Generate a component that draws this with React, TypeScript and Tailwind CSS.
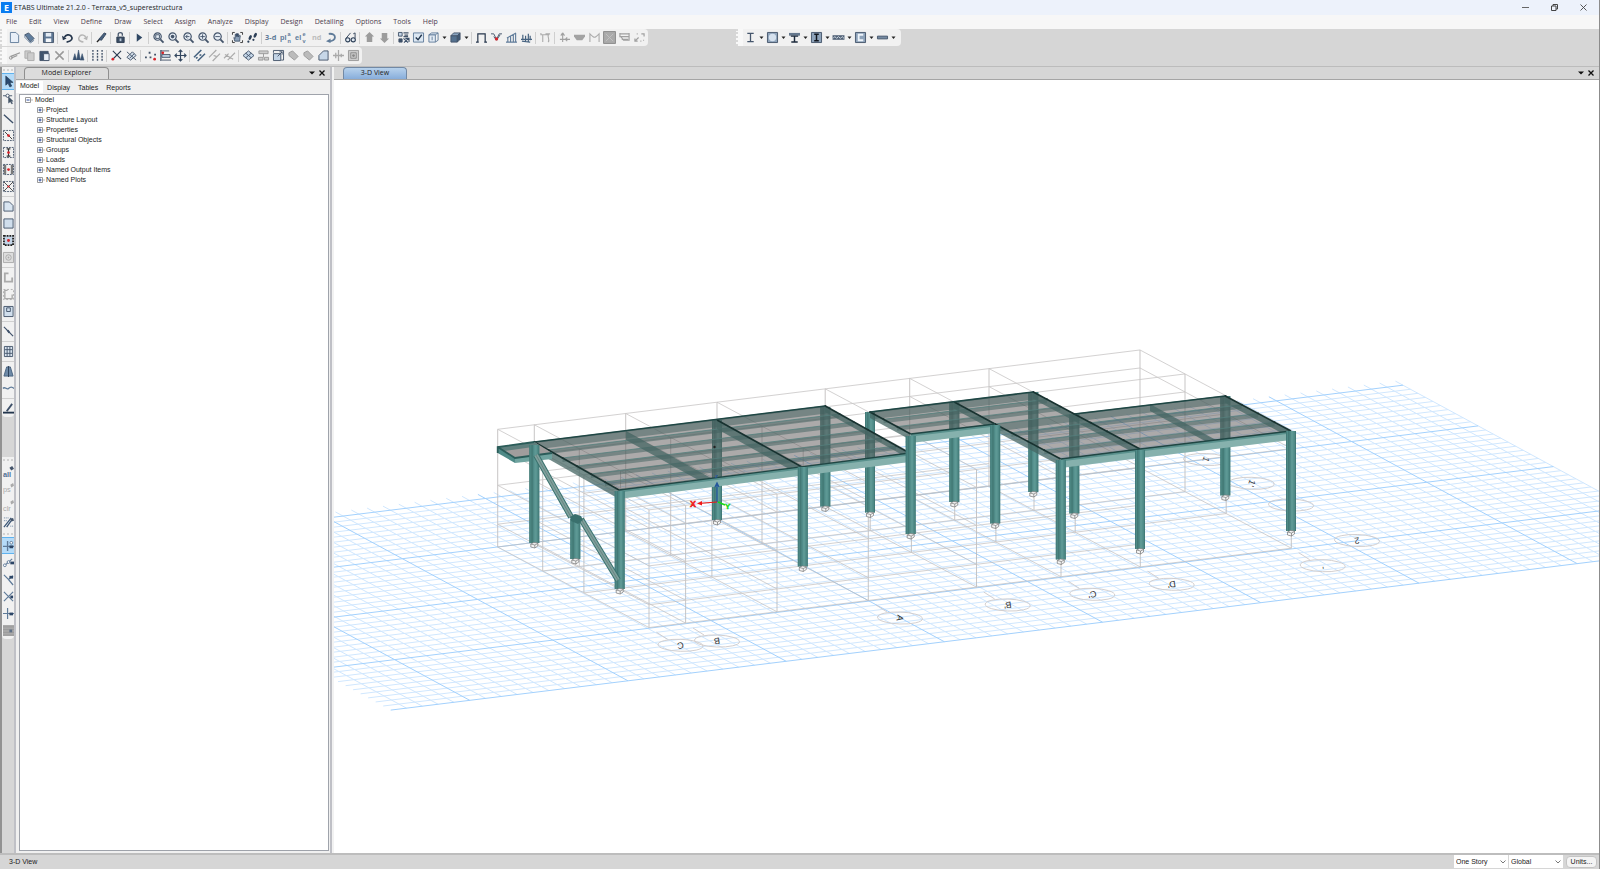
import type { ReactNode } from "react";

const D = "#44546a";
const B = "#5f7b99";
const L = "#c3d4e6";
const G = "#ababab";
const R = "#d8232a";

const ln = (d: string, c = D, w = 1) => <path d={d} fill="none" stroke={c} strokeWidth={w} />;
const sh = (d: string, f = L, c = D, w = 1) => <path d={d} fill={f} stroke={c} strokeWidth={w} />;
const lens = (inner: ReactNode) => (
  <>
    <circle cx="5" cy="5" r="4" fill="#e6edf5" stroke={D} strokeWidth="1.3" />
    <path d="M8 8l3.5 3.5" stroke={D} strokeWidth="2" />
    {inner}
  </>
);
const dashBox = <path d="M.5 .5h11v11h-11z" fill="none" stroke={D} strokeDasharray="2 1" />;
const word = (t: string, c = B, x = 0) => (
  <text x={x} y="9" fontSize="8" fontWeight="bold" fill={c} fontFamily="Open Sans, sans-serif">{t}</text>
);
const stacked = (lead: string, top: string, low: string) => (
  <g fontWeight="bold" fill={B} fontFamily="Liberation Sans, sans-serif">
    <text x="-1" y="9" fontSize="8">{lead}</text>
    <text x="7" y="4" fontSize="6">{top}</text>
    <text x="7" y="12" fontSize="6">{low}</text>
  </g>
);

const icons: Record<string, ReactNode> = {
  "New Model": sh("M1.5 .5h6l3 3v8h-9z", "#e8eff8", B),
  "Open": <>{sh("M1 3l4-2 6 6-4 4z", "#5f7d9d")}{ln("M1 3v3l6 6 4-3", B)}</>,
  "Save": <>{sh("M.5 .5h11v11h-11z", "#5c7592")}<path d="M3 1h6v4H3z" fill="#e4ebf3" /><path d="M3 7h6v4H3z" fill="#f4f7fa" /></>,
  "Undo": <>{ln("M5 11c6-1 7-4 5-6.500S4 3 2.500 6", "#26364c", 1.8)}<path d="M0 4l1 5 4-2z" fill="#26364c" /></>,
  "Redo": <>{ln("M7 11C1 10 1 7 3 4.500s6-1 6.500 1.500", "#b5b5b5", 1.6)}<path d="M12 4l-1 5-4-2z" fill="#b5b5b5" /></>,
  "Refresh": <>{ln("M1 11l3-3", "#222", 1.5)}{sh("M3 8l6-7 2 1-5 7z", "#47617f", "#31445c")}</>,
  "Lock Model": <>{sh("M2 5.500h8v6H2z", "#3a4c63", "#2c3c51")}{ln("M3.500 5V2.500C3.500 0 8 0 8 2.500V4", D, 1.4)}<path d="M5 7h2v3H5z" fill="#b9c8d8" /></>,
  "Run Analysis": <path d="M3 1.500l6 4.500-6 4.500z" fill="#2f4763" />,
  "Rubber Band Zoom": lens(<path d="M3 3h4v4H3z" fill="none" stroke={D} />),
  "Restore Full View": lens(<circle cx="5" cy="5" r="2" fill={D} />),
  "Previous Zoom": lens(<path d="M7 5H3m2-2L3 5l2 2" fill="none" stroke={D} />),
  "Zoom In": lens(<path d="M2.500 5h5M5 2.500v5" stroke={D} />),
  "Zoom Out": lens(<path d="M2.500 5h5" stroke={D} />),
  "Pan": <>{ln("M.500 3V.500H3M9 .500h2.500V3M.500 9v2.500H3M9 11.500h2.500V9", "#333")}{sh("M3 10L2 6l1.500 1V2.500h1.200V5V1.800h1.200V5V2h1.200v3.500l1-2 1 .500L8.500 8v2z", "#8ba0b8", "#33465e", 0.8)}</>,
  "Walk Through": <><ellipse cx="3.500" cy="6" rx="1.500" ry="2.800" fill="#2c3f57" transform="rotate(25 3.500 6)" /><ellipse cx="9" cy="3.500" rx="1.500" ry="2.800" fill="#2c3f57" transform="rotate(25 9 3.500)" /><circle cx="1.500" cy="10.500" r="1.200" fill="#2c3f57" /><circle cx="7" cy="8.500" r="1.200" fill="#2c3f57" /></>,
  "3-D View": word("3-d", B, -1),
  "Plan View": stacked("pl", "a", "n"),
  "Elevation View": stacked("el", "e", "v"),
  "Named View": word("nd", "#bdbdbd", 1),
  "Rotate View": <>{ln("M3 2c9-1 9 8 0 8", B, 2)}<path d="M5 7v5L0 10z" fill={B} /></>,
  "Perspective": <><circle cx="3" cy="8.500" r="2.300" fill="#dfe7f0" stroke="#2f4158" strokeWidth="1.200" /><circle cx="9" cy="8.500" r="2.300" fill="#dfe7f0" stroke="#2f4158" strokeWidth="1.200" />{ln("M1 7L6 1M11 7V1L9 2", "#2f4158")}</>,
  "Move Up": <path d="M6 0l5 5H9v6H3V5H1z" fill="#9c9c9c" />,
  "Move Down": <path d="M6 12l5-5H9V1H3v6H1z" fill="#9c9c9c" />,
  "Object Shrink": <>{sh("M.500 .500h4v4h-4z", L)}{ln("M6 1h5.500M7 3.500h4M6 5h5", D, 1.3)}{sh("M1 7.500h3.500v3.500H1z", "#3b4f69")}{ln("M6 7l5 4.500M11.500 7l-5 4.500M8 7h4v4", "#3b4f69", 1.2)}</>,
  "Display Options": <>{sh("M.500 1h11v10H.500z", "#dce7f2", B)}{ln("M3 6l2.500 2.500L9.500 3", "#22354c", 1.5)}</>,
  "Set View Cube": <>{sh("M1 3h7v8H1z", "#e4ecf5", B)}{sh("M1 3l3-2h7L8 3z", "#e4ecf5", B)}{ln("M11 1v8l-3 2M4.500 5v4", B)}</>,
  "Extruded View": <>{sh("M1 4h7v7H1z", "#54718f")}{sh("M1 4l3-3h7L8 4z", "#8aa4bf")}{sh("M11 1v7l-3 3V4z", "#3f5874")}</>,
  "Undeformed Shape": ln("M0 11h3M2 11V2h8v9M9 11h3", "#26364c", 1.3),
  "Joint Loads": <>{ln("M0 2h3l3 6 3-6h3M3 5l3 4 4-6", D)}<circle cx="6" cy="7.500" r="1.800" fill={R} /></>,
  "Frame Loads": ln("M0 11h12M2 11V6.500M5 11V5M8 11V3M10.500 11V1M1 6.500L11 1", B, 1.2),
  "Shell Loads": ln("M0 8h12M2 8V3M5 10V4M8 11V2M10 9V4M1 10l9 1", "#46627f", 1.3),
  "Deformed Shape": ln("M1 1v2h9M3 11V3M9 11c2-3-1-5 0-8M6 2h5", G, 1.2),
  "Joint Reactions": ln("M4 1v10M4 1L2 4M4 1l2 3M1 8h6M8 8h4M9 6l-2 2 2 2", "#a0a0a0", 1.2),
  "Soil Pressure": <path d="M0 3h12v2l-3 4H3L0 5z" fill="#a3a3a3" />,
  "Frame Forces": ln("M1 11V2c5 5 5 5 10 0v9", G, 1.2),
  "Shell Forces": <><path d="M-.500-.500h13v13h-13z" fill="#aaa" stroke="#888" /><path d="M2 2l8 8M10 2L2 10" stroke="#c2c2c2" /></>,
  "Energy Diagram": ln("M1 1v4h10V1M1 2h10M2 5l3 4h6V5M3 8h7", "#a0a0a0", 1.3),
  "Design Results": ln("M1 10l4-4M1 7v3h3M8 2h3v3M3 2h1M7 10h1M10 9h1", "#a0a0a0", 1.3),
  "Cut": <>{ln("M2 7l10-4M2 9l7-3", "#999", 1.4)}<circle cx="2" cy="8.500" r="1.600" fill="none" stroke="#999" /></>,
  "Copy": <>{sh("M1 1h6v8H1z", "#ccc", G)}{sh("M4 3h7v8.500H4z", "#ccc", G)}</>,
  "Paste": <>{sh("M1 1.500h9v10H1z", "#3f546e")}{sh("M5 4h6v7.500H5z", "#e8eff7")}</>,
  "Delete": ln("M1.500 1.500l9 9M10.500 1.500l-9 9", "#999", 1.6),
  "Towers": <path d="M0 11l2-7 2 7M4 11l2-11 2 11M8 11l2-7 2 7z" fill="#395270" stroke="#395270" strokeWidth="0.600" />,
  "Grids": <path d="M1 0v12M6 0v12M11 0v12" stroke={D} strokeWidth="1.500" strokeDasharray="2 1.200" />,
  "Replicate Line": <>{ln("M2 1l9 9M11 1L3 9", "#2c3c51", 1.2)}<circle cx="2" cy="10" r="1.500" fill={R} /></>,
  "Extrude": <>{sh("M1 8l6-6 4 4-6 5z", "#d3deea", D)}{ln("M1 2l10 9M4 9l5-5", D)}</>,
  "Joint Pattern": <><path d="M0 7h2v2H0zM4 2h2v2H4zM5 7h2v2H5zM10 4h2v2h-2z" fill={D} /><circle cx="10.500" cy="10" r="1.500" fill={R} /></>,
  "Align": <>{ln("M1 0v12", D, 1.4)}{sh("M2 5h9v3H2z")}{ln("M2 11h10M1 1h9", D)}<circle cx="3" cy="3" r="1.500" fill={R} /></>,
  "Move": ln("M6 0v12M0 6h12M4 2l2-2 2 2M4 10l2 2 2-2M2 4L0 6l2 2M10 4l2 2-2 2", "#33475f", 1.3),
  "Edit Frame": ln("M0 8l8-8M4 12l8-8M2 9l2-1M8 5L6 6", "#46627f", 1.6),
  "Divide Frame": ln("M0 8l8-8M4 12l8-8M5 6l3 1", "#aaa", 1.3),
  "Join Frame": ln("M0 9l5-5M7 8l5-5M4 11l3-3M1 5l9 5", "#aaa", 1.2),
  "Mesh Shell": <>{sh("M0 6l6-5 6 5-6 5z")}{ln("M3 3.500l6 5M9 3.500l-6 5", D)}</>,
  "Merge Shell": <>{sh("M1 1h10v3H1zM.500 8h5v3h-5zM7 8h4.500v3H7z", "#ccc", "#999")}{ln("M6 4v4", "#999")}</>,
  "Expand Shell": <>{sh("M.500 4h8v7.500h-8z")}{ln("M.500 3V.500h11V11H9M5 7l5-5M7 2h3v3", D)}</>,
  "Split Shell": sh("M1 3l4-2 6 6-4 4-6-5z", "#bbb", "#999"),
  "Modify Shell": sh("M1 3l4-2 6 6-4 4-6-5z", "#bbb", "#999"),
  "Chamfer": sh("M1 11V6l5-5h5v10z", "#c7d7e8", D),
  "Reverse Wall": ln("M6 0v12M0 6h12M3 3v6M9 4v4", "#aaa", 1.4),
  "Openings": <>{sh("M.500 .500h11v11H.500z", "#ccc", "#999")}{ln("M3 3h6v6H3z", "#888")}<circle cx="6" cy="6" r="1.500" fill="#888" /></>,
  "Frame Section": ln("M2.500 1.500h7M2.500 10.500h7M6 1.500v9", "#45566c", 1.4),
  "Column Section": <>{sh("M.500 .500h11v11H.500z", "#8ea3ba")}<circle cx="6" cy="6" r="4" fill="#d5e1ee" /></>,
  "Composite Beam": <><path d="M0 1h12v3H0z" fill="#65788e" />{ln("M2 4.500h8M6 4v7M2.500 11h7", "#1c2a3c", 1.6)}</>,
  "Encased Column": <>{sh("M.500 .500h11v11H.500z", "#8ea3ba")}{ln("M3.500 2.500h5M3.500 9.500h5M6 2.500v7", "#10151c", 1.6)}</>,
  "Steel Joist": <><path d="M-.500 3.500h13v5h-13z" fill="#506176" />{ln("M0 7l2-2 2 2 2-2 2 2 2-2 2 2", "#dce5ee", 1)}</>,
  "Wall Section": <>{sh("M.500 .500h11v11H.500z", "#8ea3ba")}{ln("M9 3H4v6h5", "#eef4fa", 2)}</>,
  "Slab Section": sh("M.500 4.500h11v3H.500z", "#7489a0"),
  "Select Object": sh("M3 0v10l2.500-2 2 4 2-1-2-4H11z", "#2a4a70", "#1f3146", 0.6),
  "Reshape Object": <>{ln("M0 3h10", D)}<circle cx="5" cy="3" r="1.800" fill="#fff" stroke={D} />{sh("M6 4v7l2-1.500 1.500 2.500 1-.500L9 9h2z", "#456", D, 0.5)}</>,
  "Draw Line": ln("M1 2l10 9", "#3e5069", 1.5),
  "Quick Draw Frame": <>{dashBox}{ln("M2 2l8 8", "#333", 1)}<circle cx="6" cy="6" r="1.500" fill={R} /></>,
  "Quick Draw Column": <>{dashBox}{ln("M4 2h4M4 10h4M6 2v8", "#333", 1.2)}<circle cx="6" cy="6" r="1.500" fill={R} /></>,
  "Quick Draw Secondary": <><path d="M1 1h2.500v10H1zM8.500 1H11v10H8.500z" fill="#7a7a7a" />{dashBox}<circle cx="6" cy="6" r="1.500" fill={R} /></>,
  "Quick Draw Brace": <>{dashBox}{ln("M1 1l10 10M11 1L1 11", "#444", 1)}<circle cx="6" cy="6" r="1.200" fill={R} /></>,
  "Draw Shell": sh("M1 1h6l4 4v6H1z", "#d9e5f1", D),
  "Draw Rectangle": sh("M1 1h10v10H1z", "#d0deec", D),
  "Quick Draw Shell": <><path d="M1 1h10v10H1z" fill={L} stroke="#222" strokeWidth="2" strokeDasharray="2 1" /><circle cx="6" cy="6" r="1.600" fill={R} /></>,
  "Draw Links": <>{sh("M.500 .500h11v11H.500z", "#ddd", "#aaa")}<circle cx="6" cy="6" r="3" fill="none" stroke="#aaa" /><circle cx="6" cy="6" r="1" fill="#aaa" /></>,
  "Draw Wall": ln("M6 1.500H2v9h8V6", "#aaa", 2),
  "Quick Draw Wall": <>{ln("M5 1.500H2v9h8V6", "#aaa", 1.5)}<path d="M.500 .500h11v11H.500z" fill="none" stroke="#aaa" strokeDasharray="2 2" /></>,
  "Draw Opening": <>{sh("M1 .500h10v11H1z", "#d0deec", D)}{ln("M4 2h4v4H4z", D)}</>,
  "Draw Link": <>{ln("M1 1l10 10", "#3e5069", 1.3)}<path d="M4 5l2-1 2 3-2 1z" fill="#3e5069" /></>,
  "Draw Grids": <>{sh("M1.500 .500h9v11h-9z", "#d8e3ee", D)}{ln("M4.500 1v10M7.500 1v10M2 4h8M2 8h8", D)}</>,
  "Draw Tower": <>{sh("M1 11L4 1h4l3 10z", "#6e8aa8", "#46617e")}{ln("M6 0v12", "#2c4058")}</>,
  "Draw Tendon": ln("M0 6c2-3 4 2 6 0s4-2 6 0", B, 1.5),
  "Dimension Line": <>{ln("M0 10.500h12", "#22354c", 2)}{ln("M4 9l6-8", "#3e5069", 2)}</>,
  "Select All": <><text x="0" y="12" fontSize="8" fontWeight="bold" fill="#506f94">all</text><path d="M7 2l3-2 2 3-3 2z" fill={D} /></>,
  "Previous Selection": <><text x="0" y="10" fontSize="8" fill="#aaa">ps</text><path d="M8 2l3-2 1 3-3 2z" fill="#aaa" /></>,
  "Clear Selection": <><text x="0" y="12" fontSize="8" fill="#aaa">clr</text><path d="M8 2l3-2 1 3-3 2z" fill="#aaa" /></>,
  "Select Crossing": <>{ln("M1 11L9 1M4 11l5-7", "#3d5878", 1.4)}<path d="M1 1h6M1 4h3M8 10h3" stroke={B} strokeDasharray="1 1" /><path d="M8 2l3-1 1 3-3 1z" fill={D} /></>,
  "Snap to Grid": <>{ln("M0 7h12M5 1v11", B, 1.5)}<circle cx="9" cy="3" r="1.500" fill="#fff" stroke={B} /><path d="M7 6h4v3H7z" fill="#2c4566" /></>,
  "Snap to Ends": <>{ln("M1 10l9-8", B, 1.3)}<circle cx="2" cy="9" r="1.500" fill="#fff" stroke={B} /><circle cx="6" cy="5.500" r="1.500" fill="#fff" stroke={B} /><path d="M8 5h4v3H8z" fill="#2c4566" /></>,
  "Snap to Perpendicular": <>{ln("M1 1l5 5 5-4M6 6l5 6", B, 1.3)}<path d="M7 2h4v3H7z" fill="#2c4566" /></>,
  "Snap to Intersections": <>{ln("M1 1l10 10M11 1L1 11", B, 1.3)}<path d="M8 5h3v3H8z" fill="#2c4566" /></>,
  "Snap to Lines": <>{ln("M0 6h12M5 0v12", B, 1.3)}<path d="M7 5h4v3H7z" fill="#2c4566" /></>,
  "Snap to Fine Grid": <><path d="M0 0h12v12H0z" fill="#aaa" /><path d="M0 2h12M0 5h12M0 8h12M0 11h12" stroke="#999" /><path d="M7 5h3v3H7z" fill="#5d6f87" /></>,
};

function Icon({ name, tall = false, active = false }: { name: string; tall?: boolean; active?: boolean }) {
  return (
    <button
      type="button"
      aria-label={name}
      className={`flex shrink-0 items-center justify-center ${tall ? "h-[17px] w-full" : "h-[15px] w-[15px]"} ${active ? "border-y border-[#5fb2ee] bg-[#b5dbf8]" : ""}`}
    >
      <svg viewBox="0 0 12 12" className="h-[11px] w-[11px] overflow-visible">{icons[name]}</svg>
    </button>
  );
}

function Caret() {
  return (
    <svg viewBox="0 0 7 4" className="h-1 w-[7px] shrink-0">
      <path d="M1.500 .500h4l-2 2.500z" fill="#222" />
    </svg>
  );
}

function Toolbar({ items, spread = false }: { items: string[]; spread?: boolean }) {
  return (
    <div className={`flex h-[17px] items-center rounded-r bg-[#f1f1f1] ${spread ? "w-[165px] justify-between pr-1" : "pr-px"}`}>
      <span className="h-full w-[7px] shrink-0 border-l-2 border-dotted border-[#d8d8d8] bg-[#f8f8f8]" />
      {items.map((it, i) =>
        it === "|" ? (
          <span key={i} className="mx-px h-3 w-[2px] shrink-0 border-l border-[#cfcfcf]" />
        ) : it === "v" ? (
          <Caret key={i} />
        ) : (
          <Icon key={i} name={it} />
        ),
      )}
    </div>
  );
}

const rowOne = [
  "New Model", "Open", "|", "Save", "|", "Undo", "Redo", "|", "Refresh", "|", "Lock Model", "|", "Run Analysis", "|",
  "Rubber Band Zoom", "Restore Full View", "Previous Zoom", "Zoom In", "Zoom Out", "|", "Pan", "Walk Through", "|",
  "3-D View", "Plan View", "Elevation View", "Named View", "Rotate View", "|", "Perspective", "|", "Move Up", "Move Down", "|",
  "Object Shrink", "Display Options", "Set View Cube", "v", "Extruded View", "v", "|",
  "Undeformed Shape", "Joint Loads", "Frame Loads", "Shell Loads", "|", "Deformed Shape", "|",
  "Joint Reactions", "Soil Pressure", "Frame Forces", "Shell Forces", "Energy Diagram", "Design Results",
];
const rowTwo = [
  "Cut", "Copy", "Paste", "Delete", "|", "Towers", "|", "Grids", "|", "Replicate Line", "Extrude", "|",
  "Joint Pattern", "Align", "Move", "|", "Edit Frame", "Divide Frame", "Join Frame", "|",
  "Mesh Shell", "Merge Shell", "Expand Shell", "Split Shell", "Modify Shell", "Chamfer", "Reverse Wall", "Openings",
];
const sections = [
  "Frame Section", "v", "Column Section", "v", "Composite Beam", "v", "Encased Column", "v",
  "Steel Joist", "v", "Wall Section", "v", "Slab Section", "v",
];
const drawTools = [
  "#", "Select Object*", "Reshape Object", "|", "Draw Line", "Quick Draw Frame", "Quick Draw Column",
  "Quick Draw Secondary", "Quick Draw Brace", "|", "Draw Shell", "Draw Rectangle", "Quick Draw Shell", "Draw Links", "|",
  "Draw Wall", "Quick Draw Wall", "Draw Opening", "|", "Draw Link", "|", "Draw Grids", "|", "Draw Tower", "Draw Tendon",
  "|", "Dimension Line",
];
const snapTools = [
  "#", "Select All", "Previous Selection", "Clear Selection", "Select Crossing", "#", "Snap to Grid*", "Snap to Ends",
  "Snap to Perpendicular", "Snap to Intersections", "Snap to Lines", "Snap to Fine Grid",
];

function SideTools({ items }: { items: string[] }) {
  return (
    <div className="flex flex-col rounded-b bg-[#f1f1f1]">
      {items.map((it, i) =>
        it === "#" ? (
          <span key={i} className="mx-px flex h-[6px] items-center">
            <span className="w-full border-t-2 border-dotted border-[#d2d2d2]" />
          </span>
        ) : it === "|" ? (
          <span key={i} className="flex h-[3px] items-center"><span className="w-full border-t border-[#d0d0d0]" /></span>
        ) : (
          <Icon key={i} tall name={it.replace("*", "")} active={it.endsWith("*")} />
        ),
      )}
    </div>
  );
}

/* ---- 3-D scene ---- */

type Pt = [number, number];
const pt = (p: Pt) => `${p[0].toFixed(1)},${p[1].toFixed(1)}`;
const pts = (...a: Pt[]) => a.map(pt).join(" ");

const gridAt = (i: number, j: number): Pt => [390.7 + 15.82 * i - 7.52 * j, 710.1 - 1.953 * i - 4.07 * j];

function Seg({ a, b, c, w = 1 }: { a: Pt; b: Pt; c: string; w?: number }) {
  return <line x1={a[0]} y1={a[1]} x2={b[0]} y2={b[1]} stroke={c} strokeWidth={w} />;
}

function GroundGrid() {
  const rows = Array.from({ length: 41 }, (_, j) => j);
  const cols = Array.from({ length: 83 }, (_, i) => i + 1);
  const minor = "#d0e7fe";
  const major = "#a3d1fd";
  return (
    <g>
      {rows.filter((j) => j % 10).map((j) => <Seg key={`r${j}`} a={gridAt(0, j)} b={gridAt(83, j)} c={minor} />)}
      {cols.filter((i) => i % 10 !== 5).map((i) => <Seg key={`c${i}`} a={gridAt(i, 0)} b={gridAt(i, 41)} c={minor} />)}
      {rows.filter((j) => j % 10 === 0).map((j) => <Seg key={`R${j}`} a={gridAt(0, j)} b={gridAt(83, j)} c={major} />)}
      {cols.filter((i) => i % 10 === 5).map((i) => <Seg key={`C${i}`} a={gridAt(i, 0)} b={gridAt(i, 41)} c={major} />)}
    </g>
  );
}

const axisX = [497.7, 534.3, 625.7, 717, 825.2, 909.7, 989, 1140];
const axisV = [0, 45, 86.2, 151.3];
const levels = [0, 22.8, 61.7, 99.7, 117.7];
const base = (x: number, v: number, h: number): Pt => [x + v, 547 - 0.1235 * (x - 497.7) + 0.5325 * v - h];

function Wireframe() {
  const c = "#bfbcbc";
  return (
    <g opacity="0.85">
      {levels.map((h) => (
        <g key={h}>
          {axisV.map((v) => (h > 0 && h < 99 && v > 0 && v < 150 ? null : <Seg key={v} a={base(497.7, v, h)} b={base(h > 0 && h < 99 ? 989 : 1140, v, h)} c={c} w={0.8} />))}
          {axisX.map((x) => (h > 0 && h < 99 && x > 830 ? null : <Seg key={x} a={base(x, 0, h)} b={base(x, 151.3, h)} c={c} w={0.8} />))}
        </g>
      ))}
      {axisX.map((x) => axisV.map((v) => <Seg key={`${x}-${v}`} a={base(x, v, 0)} b={base(x, v, 117.7)} c={c} />))}
    </g>
  );
}

function Column({ x, top, bottom }: { x: number; top: number; bottom: number }) {
  return (
    <g>
      <rect x={x - 5} y={top} width="10" height={bottom - top} fill="#4f8a87" />
      <rect x={x - 3} y={top} width="1.500" height={bottom - top} fill="#437976" />
      <rect x={x} y={top} width="2.500" height={bottom - top} fill="#5d9894" />
      <path d={`M${x - 4.5} ${top}V${bottom}M${x + 4.5} ${top}V${bottom}`} stroke="#3f7673" strokeWidth="0.800" />
      <g fill="#f5f5f5" stroke="#777" strokeWidth="0.700">
        <path d={`M${x - 3.5} ${bottom + 1}l3-1.5 4 .5v3l-3 2-4-1z`} />
        <path d={`M${x - 3.5} ${bottom + 1}l4 1 3-1.5M${x + 0.5} ${bottom + 2}v3`} fill="none" />
      </g>
    </g>
  );
}

function RoofBay({ o, u, v, bays }: { o: Pt; u: Pt; v: Pt; bays: number }) {
  const dv: Pt = [v[0] - o[0], v[1] - o[1]];
  return (
    <g>
      {Array.from({ length: bays }, (_, k) => {
        const a: Pt = [o[0] + (dv[0] * k) / bays, o[1] + (dv[1] * k) / bays];
        const b: Pt = [u[0] + (dv[0] * k) / bays, u[1] + (dv[1] * k) / bays];
        const d = k === 0 ? 7 : 4;
        const s = k === 0 ? 5 : 0;
        return (
          <g key={k}>
            <polygon points={pts(a, b, [b[0] + s, b[1] + d], [a[0] + s, a[1] + d])} fill="#40605e" fillOpacity="0.5" />
            <Seg a={a} b={b} c="#55807d" w={0.8} />
            <circle cx={b[0]} cy={b[1]} r="1" fill="#1d2e2d" />
            <circle cx={a[0]} cy={a[1]} r="1" fill="#1d2e2d" />
          </g>
        );
      })}
    </g>
  );
}

function CrossBeam({ a, b, d = 9, edge = true }: { a: Pt; b: Pt; d?: number; edge?: boolean }) {
  return (
    <g>
      <polygon points={pts(a, b, [b[0], b[1] + d], [a[0], a[1] + d])} fill="#456563" fillOpacity="0.75" />
      {edge && <Seg a={a} b={b} c="#183230" w={1.6} />}
    </g>
  );
}

function FrontBeam({ a, b }: { a: Pt; b: Pt }) {
  return (
    <g>
      <polygon points={pts(a, b, [b[0], b[1] + 9], [a[0], a[1] + 9])} fill="#86b1ad" />
      <polygon points={pts(a, b, [b[0], b[1] + 2.5], [a[0], a[1] + 2.5])} fill="#5a918d" />
      <Seg a={a} b={b} c="#1f4644" w={1.3} />
    </g>
  );
}

const backColumns: [number, number, number][] = [
  [717, 420, 520], [825.3, 407, 506.5], [870, 412, 512.5], [954.3, 402, 502], [1033.3, 392, 492], [1074.3, 414, 513.5], [1225.3, 396, 495.5],
];
const frontColumns: [number, number, number][] = [
  [534.3, 445, 543], [619.7, 491, 589], [802.8, 467, 566.5], [910.7, 436, 534], [995.2, 425, 523.5], [1060.8, 460, 559.5], [1140, 450, 549], [1291, 431, 531],
];
const braces: [Pt, Pt][] = [
  [[536, 455], [571, 517]],
  [[581, 519], [618, 580]],
];

const bubbles: { x: number; y: number; t: string; r: number }[] = [
  { x: 680.5, y: 645.3, t: "C", r: 172 }, { x: 717, y: 641, t: "B", r: 172 }, { x: 900, y: 618, t: "A", r: 100 },
  { x: 1007.7, y: 605, t: "B'", r: 172 }, { x: 1092.3, y: 594.3, t: "C'", r: 172 }, { x: 1171.7, y: 584.3, t: "D'", r: 172 },
  { x: 1322.7, y: 565.7, t: "'", r: 172 }, { x: 1357, y: 540.5, t: "2", r: 172 }, { x: 1291, y: 505, t: "1", r: 110 },
  { x: 1251.7, y: 483.3, t: "1'", r: 110 }, { x: 1206, y: 459.5, t: "1", r: 110 },
];

function Scene() {
  const teal = "#4f8a87";
  return (
    <svg viewBox="334 80 1265 773" preserveAspectRatio="xMinYMin slice" className="h-full w-full" role="img" aria-label="3-D structural model">
      <GroundGrid />
      <g>
        {bubbles.map((b, i) => (
          <g key={i}>
            {i < 7 && <Seg a={[b.x - 24, b.y - 13]} b={[b.x - 13, b.y - 6]} c="#cfcaca" w={0.9} />}
            <ellipse cx={b.x} cy={b.y} rx="22.500" ry="6" fill="none" stroke="#cfcaca" strokeWidth="0.900" transform={`rotate(2 ${b.x} ${b.y})`} />
            <text x={b.x} y={b.y + 3} fontSize="9" textAnchor="middle" fill="#333" fontFamily="Liberation Sans, sans-serif" transform={`rotate(${b.r} ${b.x} ${b.y})`}>{b.t}</text>
          </g>
        ))}
      </g>
      <Wireframe />

      {backColumns.map(([x, t, b]) => <Column key={x} x={x} top={t} bottom={b} />)}

      <polygon points="534.300,442 825.300,406 909.500,453 619,490" fill="#5a5555" fillOpacity="0.500" />
      <RoofBay o={[534.3, 442]} u={[825.3, 406]} v={[619, 490]} bays={6} />
      <CrossBeam a={[626, 431]} b={[711, 478]} edge={false} />
      <CrossBeam a={[717, 420]} b={[802, 467]} />
      <CrossBeam a={[825.3, 406]} b={[909.5, 453]} d={6} />
      <CrossBeam a={[534.3, 442]} b={[619, 490]} />
      <Seg a={[534.3, 442]} b={[825.3, 406]} c="#1f4644" w={1.5} />
      <FrontBeam a={[619, 490]} b={[909.5, 453]} />

      <polygon points="497.700,447 534.300,442 552,453 515,458" fill="#a09d9d" />
      <polygon points="497.700,447 534.300,442 540,446 504,451" fill="#5f7f7d" />
      <polygon points="497.700,447 515,458 515,463 497.700,453" fill={teal} />
      <polygon points="515,458 552,453 552,459 515,463" fill="#6fa39f" />
      <path d="M497.700 453V447L534.300 442M497.700 447L515 458 552 453" fill="none" stroke="#2b5c59" strokeWidth="1.800" />

      <polygon points="870,412 1033.300,392 1074.300,414 1225.300,396 1291,431 1060.700,459 995,424 910.700,434" fill="#5a5555" fillOpacity="0.500" />
      <RoofBay o={[870, 412]} u={[1033.3, 392]} v={[910.7, 434]} bays={3} />
      <RoofBay o={[995, 424]} u={[1074.3, 414]} v={[1060.7, 459]} bays={4} />
      <RoofBay o={[1074.3, 414]} u={[1225.3, 396]} v={[1140, 449]} bays={4} />
      <CrossBeam a={[870, 412]} b={[910.7, 434]} d={6} />
      <CrossBeam a={[954.3, 402]} b={[995, 424]} d={7} />
      <CrossBeam a={[995, 424]} b={[1060.7, 459]} d={7} />
      <CrossBeam a={[1033.3, 392]} b={[1074.3, 414]} d={7} />
      <CrossBeam a={[1074.3, 414]} b={[1140, 449]} d={7} />
      <CrossBeam a={[1150, 404]} b={[1216, 440]} d={7} edge={false} />
      <CrossBeam a={[1225.3, 396]} b={[1291, 431]} d={7} />
      <path d="M870 412L1033.300 392M1074.300 414L1225.300 396" stroke="#1f4644" strokeWidth="1.500" />
      <FrontBeam a={[910.7, 434]} b={[995, 424]} />
      <FrontBeam a={[1060.7, 459]} b={[1140, 449]} />
      <FrontBeam a={[1140, 449]} b={[1291, 431]} />

      <Column x={575.3} top={519} bottom={559} />
      {frontColumns.map(([x, t, b]) => <Column key={x} x={x} top={t} bottom={b} />)}
      {braces.map(([a, b]) => (
        <g key={a[0]}>
          <Seg a={a} b={b} c="#39716d" w={6} />
          <Seg a={a} b={b} c="#7fa19d" w={4} />
          <Seg a={a} b={b} c="#6a8582" w={1} />
        </g>
      ))}
      <path d="M570 517l5-3 6 2 2 4-5 4-7-3z" fill="#3a706d" />

      <path d="M717 502V484m-2 3l2-4 2 4" stroke="#24569c" fill="none" strokeWidth="1.300" />
      <path d="M717 502l-19 1.500" stroke="#f01818" strokeWidth="1.200" />
      <path d="M697 503.500l5-2.500v4.500z" fill="#f01818" />
      <path d="M718 502l7 3" stroke="#18d818" strokeWidth="1.500" />
      <text x="690" y="507" fontSize="9" fontWeight="bold" fill="#f01818" stroke="#f01818" strokeWidth="0.500" fontFamily="Liberation Sans, sans-serif">X</text>
      <text x="725" y="509" fontSize="8" fontWeight="bold" fill="#18d818" stroke="#18d818" strokeWidth="0.400" fontFamily="Liberation Sans, sans-serif">Y</text>
      <text x="715" y="478" fontSize="6" fontWeight="bold" fill="#24569c" fontFamily="Liberation Sans, sans-serif">z</text>
      <circle cx="714.500" cy="447" r="1.200" fill="#222" />
    </svg>
  );
}

/* ---- window ---- */

const menus = ["File", "Edit", "View", "Define", "Draw", "Select", "Assign", "Analyze", "Display", "Design", "Detailing", "Options", "Tools", "Help"];
const tree = ["Project", "Structure Layout", "Properties", "Structural Objects", "Groups", "Loads", "Named Output Items", "Named Plots"];

function Expander({ open = false }: { open?: boolean }) {
  return (
    <svg viewBox="0 0 10 10" className="h-[10px] w-[10px] shrink-0">
      <path d="M2.500 2.500h5v5h-5z" fill="#fff" stroke="#999" />
      <path d={open ? "M3.5 5h3" : "M3.5 5h3M5 3.5v3"} stroke="#2b4a9b" />
      <path d="M8 5h2" stroke="#bbb" />
    </svg>
  );
}

function PaneButtons() {
  return (
    <div className="flex items-center gap-1 pr-[5px]">
      <button type="button" aria-label="Window position">
        <svg viewBox="0 0 6 4" className="h-1 w-[6px]"><path d="M0 .500h6L3 3.500z" fill="#111" /></svg>
      </button>
      <button type="button" aria-label="Close pane">
        <svg viewBox="0 0 6 6" className="h-[6px] w-[6px]"><path d="M.500 .500l5 5M5.500 .500l-5 5" stroke="#111" strokeWidth="1.300" /></svg>
      </button>
    </div>
  );
}

function StatusSelect({ label, value }: { label: string; value: string }) {
  return (
    <div className="flex h-[13px] w-[54px] items-center bg-white pr-[2px]">
      <select aria-label={label} defaultValue={value} className="h-[13px] min-w-0 flex-1 appearance-none bg-transparent pl-[2px] leading-[13px] outline-none">
        <option>{value}</option>
      </select>
      <svg viewBox="0 0 6 4" className="h-1 w-[6px] shrink-0"><path d="M.500 .500L3 3 5.500 .500" fill="none" stroke="#555" strokeWidth="0.800" /></svg>
    </div>
  );
}

export default function App() {
  return (
    <div className="flex h-screen flex-col overflow-hidden border-r border-[#8c8c8c] bg-[#d6d6d6] font-['Liberation_Sans',sans-serif] text-[7px] leading-[10px] text-[#222]">
      <header className="flex h-[15px] shrink-0 items-center bg-[#edf2fb] px-[1px] font-['Open_Sans',sans-serif]">
        <span className="flex h-[11px] w-[11px] items-center justify-center bg-[#0a7cf0] text-[9px] font-bold text-white">E</span>
        <h1 className="pl-[2px] text-[#222]">ETABS Ultimate 21.2.0 - Terraza_v5_superestructura</h1>
        <div className="ml-auto flex items-center gap-[22px] pr-[11px]">
          <button type="button" aria-label="Minimize"><svg viewBox="0 0 7 7" className="h-[7px] w-[7px]"><path d="M0 3.500h7" stroke="#666" /></svg></button>
          <button type="button" aria-label="Restore"><svg viewBox="0 0 7 7" className="h-[7px] w-[7px]"><path d="M.500 2h4.500v4.500H.500zM2 2V.500h4.500V5H5" fill="none" stroke="#444" /></svg></button>
          <button type="button" aria-label="Close"><svg viewBox="0 0 7 7" className="h-[7px] w-[7px]"><path d="M.500 .500l6 6M6.500 .500l-6 6" stroke="#444" strokeWidth="0.900" /></svg></button>
        </div>
      </header>

      <nav className="flex h-[14px] shrink-0 items-center gap-3 bg-[#f7f7f7] px-[6px] font-['Open_Sans',sans-serif] text-[#4c3c4c]">
        {menus.map((m) => <button type="button" key={m}>{m}</button>)}
      </nav>

      <div className="flex shrink-0 flex-col gap-px border-b border-[#bcbcbc] pb-[2px]">
        <div className="flex gap-[88px]">
          <Toolbar items={rowOne} />
          <Toolbar items={sections} spread />
        </div>
        <div className="flex"><Toolbar items={rowTwo} /></div>
      </div>

      <div className="flex min-h-0 flex-1">
        <aside className="flex w-[14px] shrink-0 flex-col border-l-2 border-[#929292]">
          <SideTools items={drawTools} />
          <div className="h-10 shrink-0" />
          <SideTools items={snapTools} />
        </aside>

        <section className="flex w-[318px] shrink-0 flex-col border-x-2 border-[#bfc0c6] bg-[#f0f0f0]">
          <div className="flex h-[13px] shrink-0 items-end justify-between border-b border-[#a5a5a5] bg-[#d6d6d6]">
            <h2 className="ml-2 h-3 w-[85px] rounded-t border border-b-0 border-[#8f8f8f] bg-[#dcdcdc] text-center font-['Open_Sans',sans-serif]">Model Explorer</h2>
            <div className="flex h-full items-center"><PaneButtons /></div>
          </div>
          <div role="tablist" className="flex h-[14px] shrink-0 items-center">
            {["Model", "Display", "Tables", "Reports"].map((t, i) => (
              <button type="button" role="tab" aria-selected={i === 0} key={t} className={`px-1 ${i === 0 ? "bg-white pb-[2px]" : "pt-px"}`}>{t}</button>
            ))}
          </div>
          <div className="mr-px mb-[2px] ml-[3px] flex-1 border border-[#9fa3ab] bg-white pl-[3px]">
            <div className="flex items-center gap-[2px]"><Expander open /><button type="button">Model</button></div>
            <ul className="pl-[12px]">
              {tree.map((t) => (
                <li key={t} className="flex items-center gap-px"><Expander /><button type="button">{t}</button></li>
              ))}
            </ul>
          </div>
        </section>

        <main className="flex min-w-0 flex-1 flex-col border-l-2 border-[#f2f2f2]">
          <div className="flex h-[13px] shrink-0 items-end justify-between border-b border-[#a5a5a5]">
            <h2 className="ml-[9px] h-3 w-16 rounded-t border border-b-0 border-[#7289a5] bg-linear-to-b from-[#b8d2ec] to-[#87addb] text-center font-['Open_Sans',sans-serif]">3-D View</h2>
            <div className="flex h-full items-center"><PaneButtons /></div>
          </div>
          <div className="min-h-0 flex-1 bg-white"><Scene /></div>
        </main>
      </div>

      <footer className="flex h-4 shrink-0 items-center gap-px border-t-2 border-[#bdbdbd] pr-[2px] pb-px pl-[9px]">
        <span className="mr-auto">3-D View</span>
        <StatusSelect label="Story" value="One Story" />
        <StatusSelect label="Coordinate system" value="Global" />
        <button type="button" className="ml-[2px] h-3 w-[31px] rounded-sm border border-[#c4c4c4] bg-[#f4f4f4] leading-[9px]">Units...</button>
      </footer>
    </div>
  );
}
